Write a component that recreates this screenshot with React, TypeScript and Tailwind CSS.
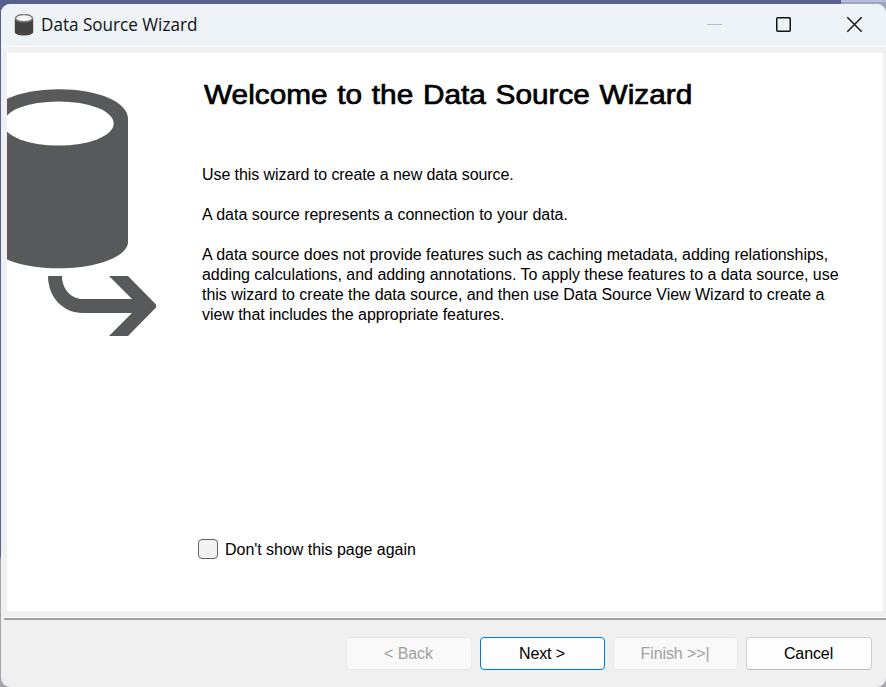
import React from "react";

const bodyFont = "font-['Liberation_Sans',Arial,sans-serif]";

function TitleIcon() {
  return (
    <svg width="20" height="23" viewBox="0 0 20 23" className="block">
      <path d="M0.8 4.5V18C0.8 20.3 4.8 21.5 10 21.5S19.2 20.3 19.2 18V4.5Z" fill="#434343" />
      <ellipse cx="10" cy="4.2" rx="8.5" ry="3.6" fill="#f8f8f8" stroke="#7c7c7c" strokeWidth="1.5" />
    </svg>
  );
}

function TitleBar() {
  return (
    <header className="flex h-[42px] shrink-0 items-center bg-[#eef3f8] pl-[13px]">
      <TitleIcon />
      <span className="mb-0.5 ml-[7px] origin-left scale-x-[0.95] font-['Open_Sans','Noto_Sans',sans-serif] text-[18px] leading-6 whitespace-nowrap text-[#111]">
        Data Source Wizard
      </span>
      <div className="ml-auto flex">
        <svg width="70" height="42" viewBox="678 4 70 42">
          <path d="M707 24.5H722" stroke="#b9bcc0" />
        </svg>
        <svg width="70" height="42" viewBox="748 4 70 42">
          <rect x="776.75" y="17.75" width="13.5" height="13.5" rx="1" fill="none" stroke="#111" strokeWidth="1.5" />
        </svg>
        <svg width="68" height="42" viewBox="818 4 68 42">
          <path d="M847.3 17.3L861.7 31.7M861.7 17.3L847.3 31.7" stroke="#111" strokeWidth="1.4" />
        </svg>
      </div>
    </header>
  );
}

function Artwork() {
  return (
    <svg width="195" height="300" viewBox="7 53 195 300" className="block shrink-0 overflow-hidden">
      <g fill="#58595b">
        <path d="M-11 119C-11 102 20 89.3 59 89.3S128 102 128 119V242C128 256 98 268.3 59 268.3S-11 256 -11 242Z" />
        <path d="M48 276H62C62 289 71 299 83 299H132L109 276H128L156 304.5V307.5L128 336H109L132 313H83C63 313 48 297 48 276Z" />
      </g>
      <ellipse cx="58.5" cy="123.5" rx="55.2" ry="22.1" fill="#fff" />
    </svg>
  );
}

function WizardButton({ label, className }: { label: string; className: string }) {
  return (
    <button className={`flex h-[33px] items-center justify-center rounded-[4px] border pr-px text-[16px] tracking-[-0.1px] whitespace-nowrap ${className}`}>
      {label}
    </button>
  );
}

export default function App() {
  return (
    <div className={`h-[687px] w-[886px] overflow-hidden bg-[linear-gradient(to_bottom,#56628e_0,#56628e_555px,#a3a4ac_560px)] text-black ${bodyFont}`}>
      <div className="flex h-1 justify-end">
        <div className="h-3 w-[45px] border-b-[10px] border-[#a0a5b8] bg-[#b5bddc]" />
      </div>
      <div className="relative ml-px flex h-[683px] flex-col overflow-hidden rounded-[9px] bg-[#f0f0f0]">
        <TitleBar />
        <div className="h-px shrink-0 bg-white" />
        <main className="mt-1.5 mr-[3px] ml-1.5 flex h-[558px] shrink-0 bg-white">
          <Artwork />
          <section className="flex flex-col">
            <h1 className="mt-[26px] ml-[2px] origin-left scale-x-[1.103] self-start text-[27px] leading-8 font-normal [word-spacing:1.3px] whitespace-nowrap [-webkit-text-stroke:0.7px_#000]">
              Welcome to the Data Source Wizard
            </h1>
            <div className="mt-[54px] flex flex-col gap-5 text-[16px] leading-5 whitespace-nowrap">
              <p className="tracking-[-0.07px]">Use this wizard to create a new data source.</p>
              <p className="tracking-[-0.01px]">A data source represents a connection to your data.</p>
              <p className="tracking-[-0.03px]">
                A data source does not provide features such as caching metadata, adding relationships,<br />
                adding calculations, and adding annotations. To apply these features to a data source, use<br />
                this wizard to create the data source, and then use Data Source View Wizard to create a<br />
                <span className="tracking-[-0.06px]">view that includes the appropriate features.</span>
              </p>
            </div>
            <label className="mt-[214px] -ml-1 flex items-start gap-[7px] text-[16px] leading-5 tracking-[-0.03px] whitespace-nowrap">
              <input type="checkbox" className="size-5 appearance-none rounded-[4px] border border-[#626262] bg-[#f3f3f3]" />
              <span className="pt-px">Don't show this page again</span>
            </label>
          </section>
        </main>
        <div className="mt-1.5 ml-[3px] h-[3px] shrink-0 border-t border-b-2 border-t-white border-b-[#a0a0a0]" />
        <footer className="mt-[17px] mr-[14px] flex justify-end">
          <WizardButton label="< Back" className="mr-2 w-[126px] border-[#e9e9e9] bg-[#f9f9f9] text-[#a0a0a0]" />
          <WizardButton label="Next >" className="mr-2 w-[125px] border-[#0078d4] bg-[#fdfdfd]" />
          <WizardButton label="Finish >>|" className="mr-2 w-[125px] border-[#e9e9e9] bg-[#f9f9f9] text-[#a0a0a0]" />
          <WizardButton label="Cancel" className="w-[126px] border-[#d0d0d0] border-b-[#bcbcbc] bg-[#fdfdfd]" />
        </footer>
      </div>
    </div>
  );
}
